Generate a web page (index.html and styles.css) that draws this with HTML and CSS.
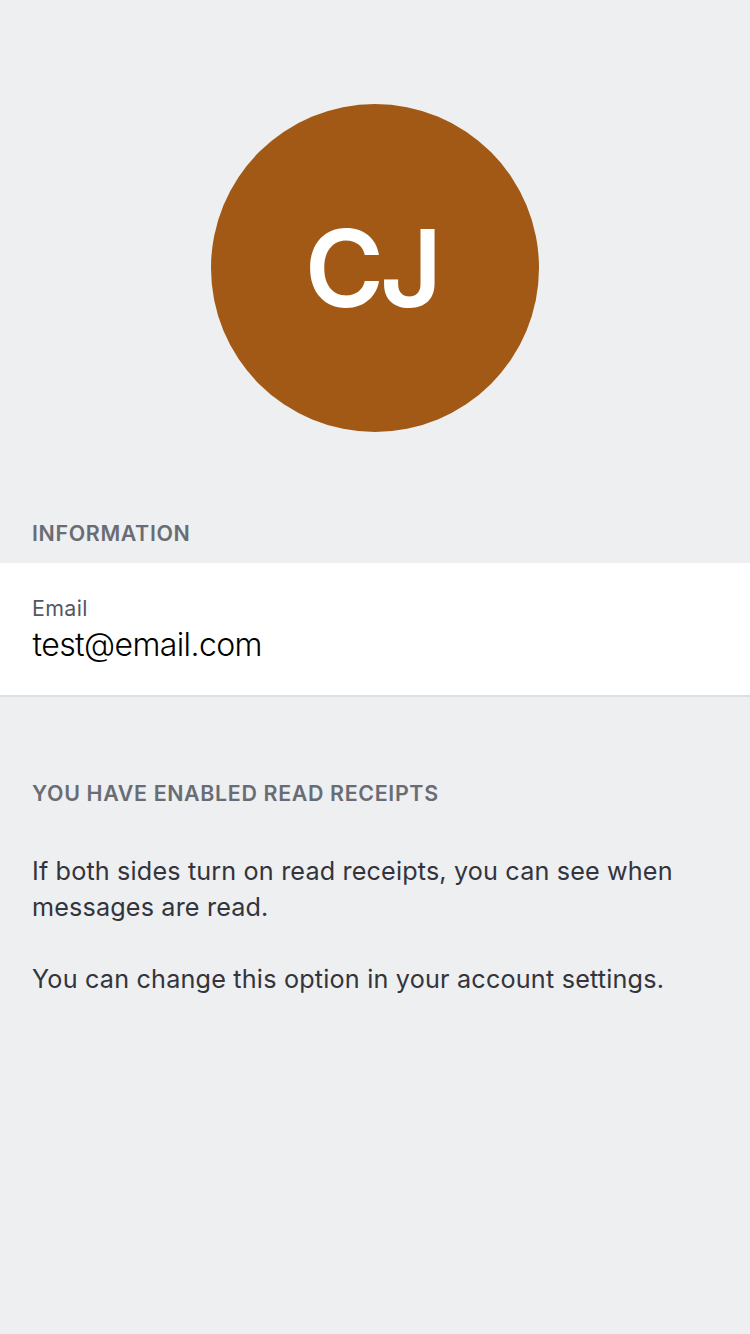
FILE: index.html
```html
<!DOCTYPE html>
<html lang="en">
<head>
<meta charset="utf-8">
<title>Profile</title>
<link rel="stylesheet" href="styles.css">
</head>
<body>
<main class="profile">
<div class="avatar"><span class="initials">CJ</span></div>
<h2 class="heading">INFORMATION</h2>
<section class="card">
<div class="label">Email</div>
<div class="value">test@email.com</div>
</section>
<h2 class="heading receipts">YOU HAVE ENABLED READ RECEIPTS</h2>
<div class="copy">
<p>If both sides turn on read receipts, you can see when<br>messages are read.</p>
<p class="settings">You can change this option in your account settings.</p>
</div>
</main>
</body>
</html>
```
FILE: styles.css
```css
* { box-sizing: border-box; }
body { margin: 0; background: #edeff0; font-family: Inter, sans-serif; }
.profile { min-height: 1334px; padding-top: 104px; display: flex; flex-direction: column; }
.avatar { align-self: center; width: 328px; height: 328px; padding: 0 7px 0 0; border-radius: 50%; background: #a25915; color: #fff; display: flex; align-items: center; justify-content: center; }
.initials { font-size: 107.5px; line-height: 120px; font-weight: 600; letter-spacing: -4px; }
.heading { margin: 86px 0 0; padding-left: 32px; font-size: 21.4px; line-height: 30px; height: 45px; font-weight: 600; letter-spacing: 0.65px; color: #6a6c75; white-space: nowrap; }
.card { height: 134px; padding: 31px 32px 0; background: #fff; border-bottom: 2px solid #dce0e3; }
.label { font-size: 21.4px; line-height: 28px; letter-spacing: 0.35px; color: #54585f; }
.value { padding-left: 0.5px; font-size: 32px; line-height: 46px; font-weight: 300; letter-spacing: -0.6px; color: #000; }
.receipts { margin-top: 81px; }
.copy { padding: 30px 32px 0; font-size: 25.2px; line-height: 36px; letter-spacing: 0.15px; color: #33343c; white-space: nowrap; }
.copy p { margin: 0 0 36px; }
.copy .settings { letter-spacing: 0.19px; }
```
